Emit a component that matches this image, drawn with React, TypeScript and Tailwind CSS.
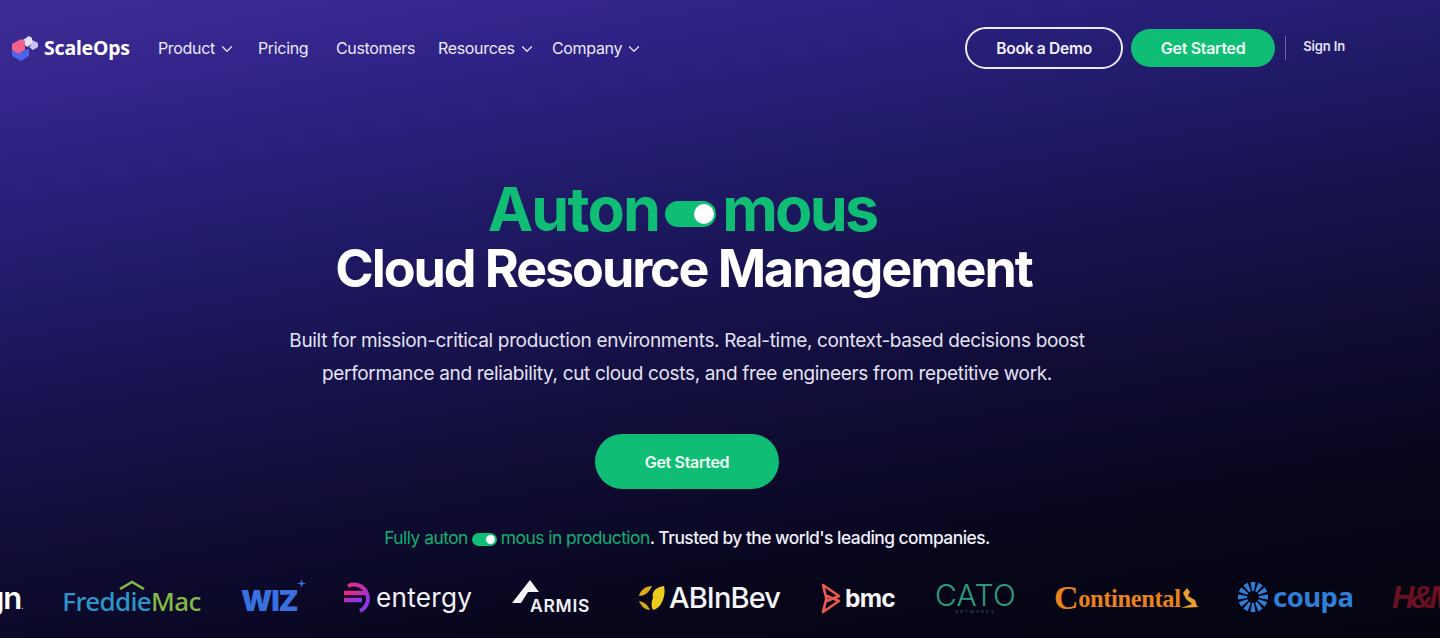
import React from 'react';
import { ChevronDown } from 'lucide-react';

const NavLink = ({ label, caret, className }: { label: string; caret?: boolean; className: string }) => (
  <a className={`flex items-center gap-[3px] text-[16px] text-[#ece9fb] tracking-[-0.02em] ${className}`}>
    {label}
    {caret && <ChevronDown className="w-[18px] h-[18px] mt-[1px]" strokeWidth={1.6} />}
  </a>
);

const Toggle = ({ className, knob }: { className: string; knob: string }) => (
  <span className={`inline-flex items-center justify-end rounded-full bg-[#10bd75] ${className}`}>
    <span className={`block rounded-full bg-white ${knob}`} />
  </span>
);

const ScaleOpsMark = () => (
  <svg width="27" height="25" viewBox="0 0 27 25" className="shrink-0">
    <path d="M0 8 L9 3 L13 5 L13 14 L6 18 L0 14 Z" fill="#f2628f" />
    <path d="M11 4 L17 0 L20 2 L20 8 L15 11 L13 9 L13 5 Z" fill="#e4e0f7" />
    <path d="M20 4 L26 7 L26 11 L21 14 L17 11 L20 8 Z" fill="#c9c2ef" />
    <path d="M0 14 L6 18 L13 14 L17 13 L17 20 L9 25 L0 20 Z" fill="#4c63ec" />
  </svg>
);

const Nav = () => (
  <header className="flex items-center h-[96px] pl-3 pr-[95px]">
    <a className="flex items-center gap-[5px]">
      <ScaleOpsMark />
      <span className="text-[19.5px] font-bold text-white tracking-[-0.01em] font-['Noto_Sans','Liberation_Sans',sans-serif]">ScaleOps</span>
    </a>
    <nav className="flex items-center ml-[28px]">
      <NavLink label="Product" caret className="w-[100px]" />
      <NavLink label="Pricing" className="w-[78px]" />
      <NavLink label="Customers" className="w-[102px]" />
      <NavLink label="Resources" caret className="w-[114px]" />
      <NavLink label="Company" caret className="w-[100px]" />
    </nav>
    <div className="ml-auto flex items-center">
      <a className="flex items-center justify-center w-[158px] h-[42px] pt-[1px] rounded-full border-2 border-[#ece9fb] text-[15.6px] font-semibold text-[#f2f0fc] tracking-[-0.02em]">
        Book a Demo
      </a>
      <a className="flex items-center justify-center ml-2 w-[144px] h-[38px] rounded-full bg-[#10bd75] text-[16px] font-semibold text-[#eefcf5] tracking-[-0.02em]">
        Get Started
      </a>
      <span className="ml-[10px] w-px h-[24px] bg-[#6f6aa8]" />
      <a className="ml-[17px] mb-[3px] text-[13px] font-semibold text-[#e6e3f7] tracking-[-0.01em]">Sign In</a>
    </div>
  </header>
);

const Hero = () => (
  <section className="flex flex-col items-center pr-[66px] pt-[84px]">
    <h1 className="flex flex-col items-center font-bold">
      <span className="flex items-center h-[59px] mr-[10px] text-[61px] leading-[59px] tracking-[-0.03em] text-[#10bd75]">
        Auton
        <Toggle className="w-[51px] h-[26px] mx-[6px] mt-[9px] pr-[2px]" knob="w-[20px] h-[20px]" />
        <span className="tracking-[-0.045em]">mous</span>
      </span>
      <span className="h-[59px] mr-[7px] text-[52px] leading-[59px] tracking-[-0.04em] text-white">Cloud Resource Management</span>
    </h1>
    <p className="mt-[26px] text-center text-[19px] leading-[33px] text-[#e4e2f0] tracking-[-0.018em]">
      Built for mission-critical production environments. Real-time, context-based decisions boost
      <br />
      performance and reliability, cut cloud costs, and free engineers from repetitive work.
    </p>
    <a className="mt-[44px] flex items-center justify-center w-[184px] h-[55px] rounded-full bg-[#10bd75] text-[16px] font-semibold text-[#eefcf5] tracking-[-0.02em]">
      Get Started
    </a>
    <p className="mt-[37px] flex items-center text-[17.4px] leading-[24px] font-medium tracking-[-0.03em] text-[#f2f0fa]">
      <span className="text-[#12b070] font-normal">Fully auton</span>
      <Toggle className="w-[25px] h-[13px] mx-[4px] mt-[2px] pr-[2px]" knob="w-[9px] h-[9px]" />
      <span className="text-[#12b070] font-normal">mous in production</span>
      . Trusted by the world's leading companies.
    </p>
  </section>
);

const LogoRow = () => (
  <div className="flex items-center h-[60px] mt-[18px] overflow-hidden whitespace-nowrap">
    {/* cut off by the left edge, like the marquee */}
    <span className="-ml-[3px] w-[26px] overflow-hidden flex justify-end text-[31px] font-semibold text-white tracking-[-0.03em] shrink-0">
      gn<span className="text-[8px] self-end mb-[9px]">.</span>
    </span>

    <span className="ml-[39px] w-[139px] shrink-0 flex flex-col items-center">
      <svg width="28" height="10" viewBox="0 0 28 10" className="mb-[-4px]">
        <path d="M2 9 L14 2 L26 9" fill="none" stroke="#82ba45" strokeWidth="2.6" />
      </svg>
      <span className="text-[26px] leading-[30px] font-medium tracking-[-0.025em] font-['Noto_Sans',sans-serif]">
        <span className="text-[#2c96c9]">Freddie</span>
        <span className="text-[#82ba45]">Mac</span>
      </span>
    </span>

    <span className="ml-[40px] w-[62px] shrink-0 flex items-start">
      <span className="text-[29px] leading-[32px] mt-[6px] font-black text-[#3a6fe0] tracking-[-0.04em] font-['Inter',sans-serif]">WIZ</span>
      <svg width="9" height="9" viewBox="0 0 10 10" className="shrink-0">
        <path d="M5 0 L6 4 L10 5 L6 6 L5 10 L4 6 L0 5 L4 4 Z" fill="#3a6fe0" />
      </svg>
    </span>

    <span className="ml-[41px] w-[128px] shrink-0 flex items-center gap-[6px]">
      <svg width="26" height="32" viewBox="0 0 26 32" className="shrink-0">
        <defs>
          <linearGradient id="eg" x1="0" y1="0" x2="1" y2="1">
            <stop offset="0" stopColor="#f0287a" />
            <stop offset="1" stopColor="#7a3cf0" />
          </linearGradient>
        </defs>
        <path d="M4 4 A12 12 0 0 1 16 29" fill="none" stroke="url(#eg)" strokeWidth="4" />
        <path d="M0 11 H22 M0 18 H18" fill="none" stroke="url(#eg)" strokeWidth="4.5" />
      </svg>
      <span className="text-[26.2px] leading-[30px] text-[#f1f1f5] tracking-[0.01em] font-['Inter',sans-serif]">entergy</span>
    </span>

    <span className="ml-[40px] w-[86px] shrink-0 flex flex-col items-start">
      <svg width="28" height="24" viewBox="0 0 28 24" className="shrink-0 mb-[-8px]">
        <path d="M0 23 L18 0 L27 12 L16 12 L9 23 Z" fill="#f4f4f6" />
      </svg>
      <span className="ml-[18px] text-[17.5px] leading-[20px] font-semibold text-[#f1f1f5] tracking-[0.04em] font-['Inter',sans-serif]">ARMIS</span>
    </span>

    <span className="ml-[40px] w-[143px] shrink-0 flex items-center gap-[4px]">
      <svg width="27" height="26" viewBox="0 0 27 26" className="shrink-0">
        <path d="M15 13 C13 6 19 2 26 1 C28 8 25 23 15 25 C13 21 13 17 15 13 Z" fill="#eccb1d" />
        <path d="M14 1 C8 1 2 5 1 11 C6 11 11 8 14 1 Z" fill="#d9a91c" />
        <path d="M1 16 C3 21 7 25 12 25 C10 20 6 17 1 16 Z" fill="#d9a91c" />
      </svg>
      <span className="text-[29px] leading-[32px] font-medium text-[#f4f4f6] tracking-[-0.03em] font-['Inter',sans-serif]">ABInBev</span>
    </span>

    <span className="ml-[39px] w-[76px] shrink-0 flex items-center gap-[4px]">
      <svg width="21" height="31" viewBox="0 0 21 31" className="shrink-0">
        <path d="M3 2 L19 13 L7 18 Z M7 13 L19 18 L3 29 Z" fill="none" stroke="#ea5a50" strokeWidth="2.6" strokeLinejoin="round" />
      </svg>
      <span className="text-[24.5px] leading-[30px] font-bold text-[#f6f6f8] tracking-[-0.03em] font-['Inter',sans-serif]">bmc</span>
    </span>

    <span className="ml-[39px] w-[81px] shrink-0 flex flex-col items-center">
      <span className="text-[30px] leading-[28px] text-[#2c9c7c] tracking-[0.01em] font-['Inter',sans-serif] font-light">CATO</span>
      <span className="text-[4px] leading-[6px] text-[#2a6f60] tracking-[0.55em] font-['Liberation_Sans',sans-serif]">NETWORKS</span>
    </span>

    <span className="ml-[38px] w-[143px] shrink-0 flex items-center">
      <span className="text-[24.5px] leading-[32px] font-bold text-[#e8821e] tracking-[-0.015em] font-['Liberation_Serif',serif]">
        <span className="text-[34px] leading-[32px] align-[-2px]">C</span>ontinental
      </span>
      <svg width="18" height="22" viewBox="0 0 18 22" className="shrink-0">
        <path d="M6 1 L9 5 L7 9 L14 13 L16 19 L18 20 L0 21 L11 17 L5 12 L2 6 Z" fill="#e8a030" />
      </svg>
    </span>

    <span className="ml-[39px] mb-[2px] w-[117px] shrink-0 flex items-center gap-[3px]">
      <svg width="34" height="30" viewBox="-17 -15 34 30" className="shrink-0">
        {[0, 30, 60, 90, 120, 150, 180, 210, 240, 270, 300, 330].map((deg) => (
          <path key={deg} d="M-2.5 -15 L2.5 -15 L1 -6 L-1 -6 Z" fill="#2f7fd6" transform={`rotate(${deg})`} />
        ))}
      </svg>
      <span className="text-[27.5px] leading-[32px] font-bold text-[#2f7fd6] tracking-[-0.02em] font-['Noto_Sans',sans-serif]">coupa</span>
    </span>

    <span className="ml-[39px] shrink-0 text-[31px] leading-[36px] italic font-bold text-[#6a1020] tracking-[-0.12em] font-['Liberation_Sans',sans-serif]">H&amp;M</span>
  </div>
);

export default function App() {
  return (
    <div className="w-[1440px] h-[638px] overflow-hidden font-['Inter',sans-serif] bg-[linear-gradient(170deg,#3f2b96_0%,#2f2387_16%,#1f1a66_34%,#120e3c_58%,#07061a_82%,#04040f_100%)]">
      <Nav />
      <Hero />
      <LogoRow />
    </div>
  );
}
